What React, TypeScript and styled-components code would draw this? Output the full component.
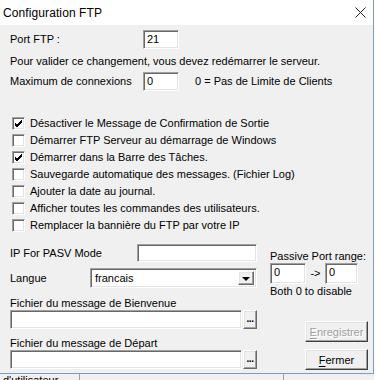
import { createGlobalStyle } from 'styled-components';
import styled, { css } from 'styled-components';

const GlobalStyle = createGlobalStyle`
  html, body {
    margin: 0;
    padding: 0;
    background: #ffffff;
  }
  body {
    width: 377px;
    height: 380px;
    overflow: hidden;
    font-family: 'Liberation Sans', Arial, sans-serif;
    font-size: 11px;
    color: #000;
  }
`;

const sunken = css`
  box-sizing: border-box;
  background: #fff;
  border: 1px solid;
  border-color: #a0a0a0 #fff #fff #a0a0a0;
  box-shadow: inset 1px 1px 0 #696969, inset -1px -1px 0 #e3e3e3;
`;

const raised = css`
  box-sizing: border-box;
  background: #f0f0f0;
  border: 1px solid;
  border-color: #fff #696969 #696969 #fff;
  box-shadow: inset -1px -1px 0 #a0a0a0, inset 1px 1px 0 #e3e3e3;
`;

const Window = styled.div`
  width: 374px;
  box-sizing: border-box;
  border-right: 1px solid #7a9cc6;
  border-bottom: 1px solid #7a9cc6;
  background: #f0f0f0;
`;

const TitleBar = styled.div`
  height: 25px;
  background: #fff;
  display: flex;
  align-items: center;
  justify-content: space-between;
  padding: 0 7px 0 3px;
  font-family: 'Liberation Sans', Arial, sans-serif;
  font-size: 12px;
  letter-spacing: 0.1px;
`;

const Body = styled.div`
  height: 348px;
  box-sizing: border-box;
  padding: 5px 0 0 10px;
  display: flex;
  flex-direction: column;
`;

const Row = styled.div<{ $top?: number; $h?: number }>`
  display: flex;
  align-items: center;
  height: ${({ $h }) => $h ?? 19}px;
  margin-top: ${({ $top }) => $top ?? 0}px;
`;

const Label = styled.span<{ $w?: number }>`
  display: inline-block;
  line-height: 13px;
  ${({ $w }) => $w !== undefined && css`width: ${$w}px;`}
  flex-shrink: 0;
`;

const Text = styled.div<{ $top?: number }>`
  line-height: 13px;
  margin-top: ${({ $top }) => $top ?? 0}px;
  white-space: nowrap;
`;

const Field = styled.div<{ $w: number; $h?: number }>`
  ${sunken}
  width: ${({ $w }) => $w}px;
  height: ${({ $h }) => $h ?? 19}px;
  padding: 2px 0 0 3px;
  line-height: 13px;
  flex-shrink: 0;
`;

const Note = styled.span`
  margin-left: 16px;
  line-height: 13px;
`;

const CheckList = styled.div`
  margin-top: 24px;
  display: flex;
  flex-direction: column;
`;

const CheckRow = styled.div`
  display: flex;
  align-items: center;
  height: 17px;
  padding-left: 2px;
`;

const Box = styled.span`
  ${sunken}
  width: 13px;
  height: 13px;
  margin-right: 5px;
  display: flex;
  align-items: center;
  justify-content: center;
`;

const Lower = styled.div`
  display: flex;
  margin-top: 10px;
`;

const LeftCol = styled.div`
  width: 247px;
  display: flex;
  flex-direction: column;
`;

const RightCol = styled.div`
  margin-left: 13px;
  display: flex;
  flex-direction: column;
`;

const Select = styled.div`
  ${sunken}
  width: 167px;
  height: 20px;
  display: flex;
  align-items: stretch;
  padding: 2px;
`;

const SelectText = styled.span`
  flex: 1;
  padding-left: 2px;
  line-height: 15px;
`;

const ArrowBtn = styled.span`
  ${raised}
  width: 16px;
  display: flex;
  align-items: center;
  justify-content: center;
`;

const DotsBtn = styled.span`
  ${raised}
  width: 16px;
  height: 19px;
  margin-left: 1px;
  display: flex;
  align-items: center;
  justify-content: center;
  font-weight: bold;
  font-size: 10px;
  letter-spacing: -0.5px;
  padding-bottom: 3px;
`;

const Arrow = styled.span`
  width: 0;
  height: 0;
  border-left: 4px solid transparent;
  border-right: 4px solid transparent;
  border-top: 4px solid #000;
  margin-top: 1px;
`;

const RangeSep = styled.span`
  width: 19px;
  text-align: center;
  line-height: 13px;
`;

const Buttons = styled.div`
  margin: 23px 0 0 35px;
  display: flex;
  flex-direction: column;
  gap: 7px;
`;

const Button = styled.div<{ $disabled?: boolean }>`
  ${raised}
  width: 63px;
  height: 21px;
  display: flex;
  align-items: center;
  justify-content: center;
  border-color: #fff #404040 #404040 #fff;
  ${({ $disabled }) =>
    $disabled &&
    css`
      color: #a0a0a0;
      text-shadow: 1px 1px 0 #fff;
    `}
  u {
    text-decoration-thickness: 1px;
    text-underline-offset: 2px;
  }
`;

const Backdrop = styled.div`
  height: 6px;
  overflow: hidden;
  display: flex;
  background: #f0f0f0;
  width: 374px;
`;

const BackCell = styled.div<{ $w: number }>`
  width: ${({ $w }) => $w}px;
  box-sizing: border-box;
  border-right: 1px solid #a0a0a0;
  padding: 0 0 0 3px;
  line-height: 13px;
  margin-top: 0px;
  color: #000;
  white-space: nowrap;
`;

const CheckMark = () => (
  <svg width="9" height="9" viewBox="0 0 9 9">
    <path d="M1 4 L3 6 L8 1 M1 5 L3 7 L8 2 M1 6 L3 8 L8 3" stroke="#000" strokeWidth="1" fill="none" />
  </svg>
);

const CloseIcon = () => (
  <svg width="11" height="11" viewBox="0 0 11 11">
    <path d="M0.5 0.5 L10.5 10.5 M10.5 0.5 L0.5 10.5" stroke="#222" strokeWidth="1" />
  </svg>
);

const options: { label: string; checked: boolean }[] = [
  { label: 'Désactiver le Message de Confirmation de Sortie', checked: true },
  { label: 'Démarrer FTP Serveur au démarrage de Windows', checked: false },
  { label: 'Démarrer dans la Barre des Tâches.', checked: true },
  { label: 'Sauvegarde automatique des messages. (Fichier Log)', checked: false },
  { label: 'Ajouter la date au journal.', checked: false },
  { label: 'Afficher toutes les commandes des utilisateurs.', checked: false },
  { label: 'Remplacer la bannière du FTP par votre IP', checked: false },
];

export default function App() {
  return (
    <>
      <GlobalStyle />
      <Window>
        <TitleBar>
          <span>Configuration FTP</span>
          <CloseIcon />
        </TitleBar>
        <Body>
          <Row>
            <Label $w={133}>Port FTP :</Label>
            <Field $w={36}>21</Field>
          </Row>
          <Text $top={6}>Pour valider ce changement, vous devez redémarrer le serveur.</Text>
          <Row $top={4}>
            <Label $w={133}>Maximum de connexions</Label>
            <Field $w={36}>0</Field>
            <Note>0 = Pas de Limite de Clients</Note>
          </Row>
          <CheckList>
            {options.map(o => (
              <CheckRow key={o.label}>
                <Box>{o.checked ? <CheckMark /> : null}</Box>
                <Label>{o.label}</Label>
              </CheckRow>
            ))}
          </CheckList>
          <Lower>
            <LeftCol>
              <Row $h={18}>
                <Label $w={127}>IP For PASV Mode</Label>
                <Field $w={120} $h={18} />
              </Row>
              <Row $top={6} $h={20}>
                <Label $w={80}>Langue</Label>
                <Select>
                  <SelectText>francais</SelectText>
                  <ArrowBtn>
                    <Arrow />
                  </ArrowBtn>
                </Select>
              </Row>
              <Text $top={9}>Fichier du message de Bienvenue</Text>
              <Row>
                <Field $w={232} />
                <DotsBtn>...</DotsBtn>
              </Row>
              <Text $top={8}>Fichier du message de Départ</Text>
              <Row>
                <Field $w={232} />
                <DotsBtn>...</DotsBtn>
              </Row>
            </LeftCol>
            <RightCol>
              <Text $top={6}>Passive Port range:</Text>
              <Row $h={21}>
                <Field $w={36} $h={21}>0</Field>
                <RangeSep>-&gt;</RangeSep>
                <Field $w={33} $h={21}>0</Field>
              </Row>
              <Text $top={1}>Both 0 to disable</Text>
              <Buttons>
                <Button $disabled>
                  <span>
                    <u>E</u>nregistrer
                  </span>
                </Button>
                <Button>
                  <span>
                    <u>F</u>ermer
                  </span>
                </Button>
              </Buttons>
            </RightCol>
          </Lower>
        </Body>
      </Window>
      <Backdrop>
        <BackCell $w={80}>d'utilisateur</BackCell>
        <BackCell $w={204} />
      </Backdrop>
    </>
  );
}
